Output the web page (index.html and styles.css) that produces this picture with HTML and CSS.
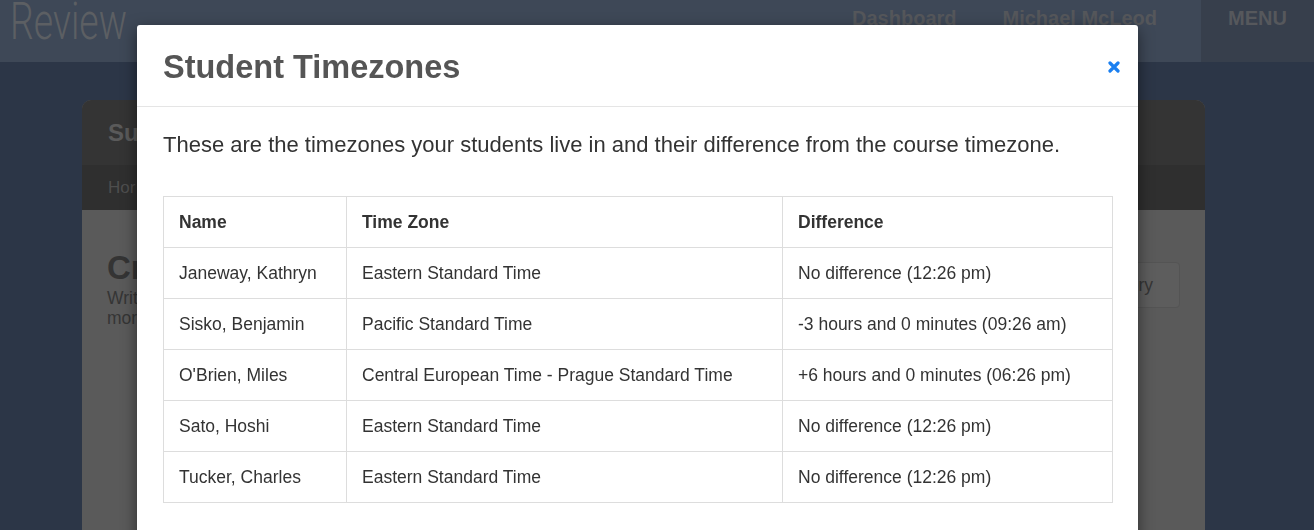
FILE: index.html
```html
<!DOCTYPE html>
<html lang="en">
<head>
    <meta charset="UTF-8">
    <meta name="viewport" content="width=device-width, initial-scale=1.0">
    <title>Student Timezones</title>
    <link rel="stylesheet" href="styles.css">
</head>
<body>

    <!-- Page behind the modal (dimmed) -->
    <header class="topbar">
        <div class="brand"><span>Review</span></div>
        <nav class="topnav">
            <a href="#">Dashboard</a>
            <a href="#">Michael McLeod</a>
        </nav>
        <div class="menu-btn">MENU</div>
    </header>

    <div class="panel">
        <div class="panel-head">Su</div>
        <div class="crumbs">Hor</div>
        <div class="panel-body">
            <div class="panel-row">
                <div>
                    <h1>Cr</h1>
                    <p>Writ<br>mor</p>
                </div>
                <button class="ghost-btn">History</button>
            </div>
        </div>
    </div>

    <!-- Modal -->
    <div class="modal">
        <div class="modal-header">
            <h2>Student Timezones</h2>
            <button class="close" aria-label="Close">
                <svg width="12" height="12" viewBox="0 0 12 12">
                    <path d="M2 2 L10 10 M10 2 L2 10" stroke="#1a7ff0" stroke-width="3.2" stroke-linecap="round"/>
                </svg>
            </button>
        </div>
        <div class="modal-body">
            <p class="intro">These are the timezones your students live in and their difference from the course timezone.</p>

            <table class="tz-table">
                <thead>
                    <tr>
                        <th class="col-name">Name</th>
                        <th class="col-zone">Time Zone</th>
                        <th>Difference</th>
                    </tr>
                </thead>
                <tbody>
                    <tr>
                        <td>Janeway, Kathryn</td>
                        <td>Eastern Standard Time</td>
                        <td>No difference (12:26 pm)</td>
                    </tr>
                    <tr>
                        <td>Sisko, Benjamin</td>
                        <td>Pacific Standard Time</td>
                        <td>-3 hours and 0 minutes (09:26 am)</td>
                    </tr>
                    <tr>
                        <td>O'Brien, Miles</td>
                        <td>Central European Time - Prague Standard Time</td>
                        <td>+6 hours and 0 minutes (06:26 pm)</td>
                    </tr>
                    <tr>
                        <td>Sato, Hoshi</td>
                        <td>Eastern Standard Time</td>
                        <td>No difference (12:26 pm)</td>
                    </tr>
                    <tr>
                        <td>Tucker, Charles</td>
                        <td>Eastern Standard Time</td>
                        <td>No difference (12:26 pm)</td>
                    </tr>
                </tbody>
            </table>
        </div>
    </div>

</body>
</html>
```

FILE: styles.css
```css
body {
    font-family: "Liberation Sans", Arial, sans-serif;
    background: #2c3647;
    margin: 0;
    padding: 0;
    height: 530px;
    overflow: hidden;
}

/* Top bar */
.topbar {
    display: flex;
    align-items: stretch;
    height: 62px;
    background: #3e4857;
}

.brand {
    padding-left: 10px;
    overflow: hidden;
    height: 62px;
}

.brand span {
    display: inline-block;
    font-family: Roboto, sans-serif;
    font-weight: 300;
    font-size: 52px;
    line-height: 44px;
    color: #5c5f63;
    transform: scaleX(0.72);
    transform-origin: left;
}

.topnav {
    margin-left: auto;
    display: flex;
    gap: 46px;
    padding-right: 44px;
}

.topnav a {
    font-weight: 700;
    font-size: 20px;
    line-height: 36px;
    color: #55575b;
    text-decoration: none;
}

.menu-btn {
    width: 113px;
    background: #373f4c;
    text-align: center;
    font-weight: 700;
    font-size: 20px;
    line-height: 36px;
    color: #56585c;
}

/* Panel behind */
.panel {
    margin: 38px 0 0 82px;
    width: 1123px;
    height: 440px;
    border-radius: 9px 9px 0 0;
    overflow: hidden;
    background: #5a5a5a;
}

.panel-head {
    height: 65px;
    background: #343434;
    color: #5a5a5a;
    font-weight: 700;
    font-size: 24px;
    line-height: 65px;
    padding-left: 26px;
}

.crumbs {
    height: 45px;
    background: #2f2f2f;
    color: #4e4e4e;
    font-size: 17px;
    line-height: 45px;
    padding-left: 26px;
}

.panel-body {
    padding: 40px 25px 0 25px;
}

.panel-row {
    display: flex;
    justify-content: space-between;
    align-items: flex-start;
}

.panel-body h1 {
    margin: 0 0 2px;
    font-size: 33px;
    line-height: 36px;
    color: #343434;
}

.panel-body p {
    margin: 0;
    font-size: 17.5px;
    line-height: 20px;
    color: #353535;
}

.ghost-btn {
    margin-top: 12px;
    height: 46px;
    padding: 0 26px 0 12px;
    background: #5d5d5d;
    border: 1px solid #545454;
    border-radius: 4px;
    color: #353535;
    font-family: inherit;
    font-size: 17.5px;
}

/* Modal */
.modal {
    position: fixed;
    top: 25px;
    left: 137px;
    width: 1001px;
    height: 520px;
    background: #fff;
    border-radius: 3px 3px 0 0;
    box-shadow: 0 5px 15px rgba(0, 0, 0, 0.5);
}

.modal-header {
    display: flex;
    justify-content: space-between;
    align-items: center;
    padding: 26px 18px 22px 26px;
    border-bottom: 1px solid #e5e5e5;
}

.modal-header h2 {
    margin: 0;
    font-size: 32.5px;
    line-height: 33px;
    font-weight: 700;
    color: #555;
}

.close {
    background: none;
    border: none;
    padding: 0;
    margin-bottom: 2px;
    cursor: pointer;
    display: flex;
}

.modal-body {
    padding: 24px 26px;
}

.intro {
    margin: 0 0 37px;
    font-size: 22px;
    line-height: 28px;
    color: #333;
}

.tz-table {
    width: 950px;
    border-collapse: collapse;
    table-layout: fixed;
    font-size: 17.5px;
    color: #333;
}

.tz-table th,
.tz-table td {
    border: 1px solid #dddddd;
    padding: 15px 15px;
    line-height: 20px;
    text-align: left;
    white-space: nowrap;
}

.tz-table th {
    font-weight: 700;
}

.col-name {
    width: 152px;
}

.col-zone {
    width: 405px;
}
```
